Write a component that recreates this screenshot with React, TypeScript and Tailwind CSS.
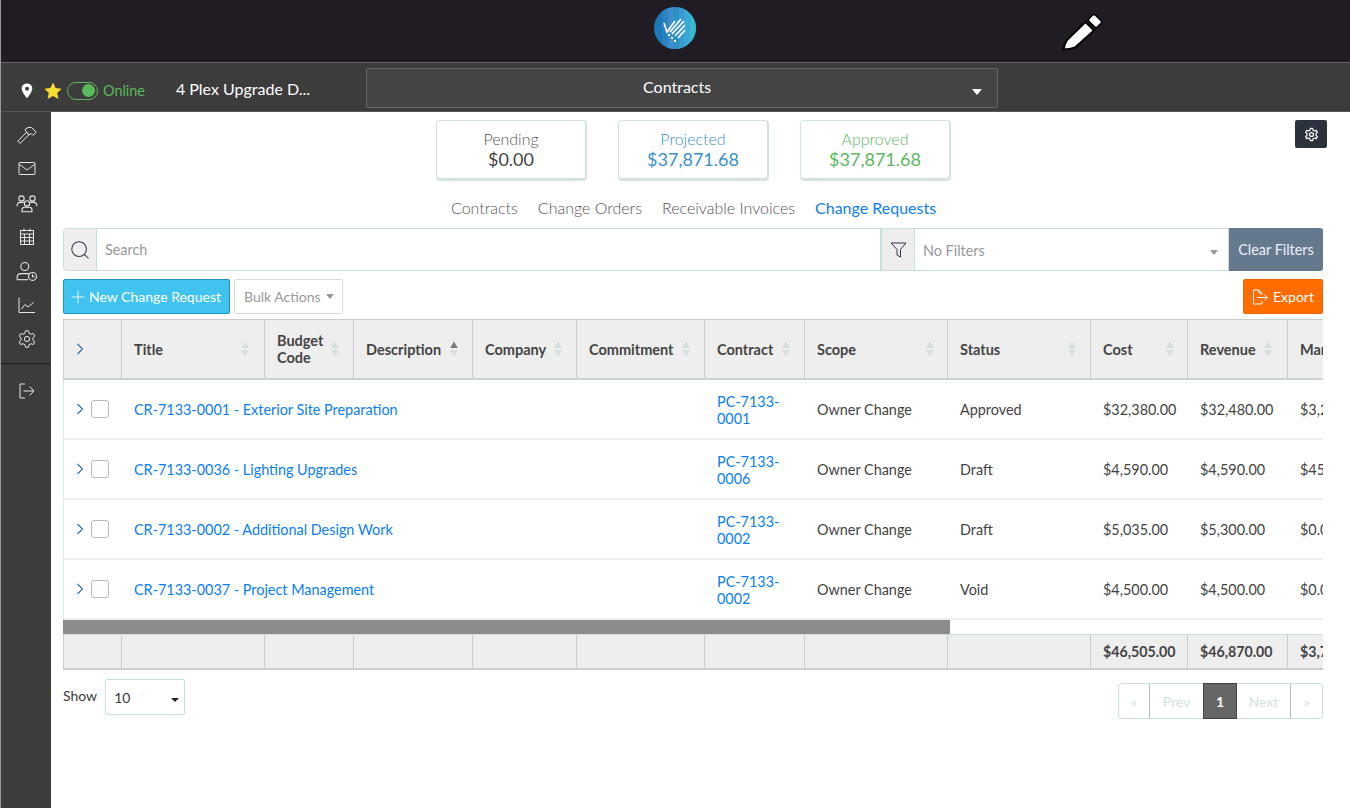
import React from "react";
import { Search, Plus } from "lucide-react";

const cols = "grid grid-cols-[58px_143px_89px_119px_104px_128px_100px_143px_143px_97px_100px_100px] w-[1324px]";

function Sort({ up = false }: { up?: boolean }) {
  return (
    <svg width="10" height="16" viewBox="0 0 10 16" className="shrink-0">
      <path d="M5 0.5 L8.8 7 H1.2 Z" fill={up ? "#7b7b7b" : "#d5dfdd"} />
      <path d="M5 15.5 L8.8 9 H1.2 Z" fill="#d5dfdd" />
    </svg>
  );
}

function Chevron() {
  return (
    <svg width="8" height="12" viewBox="0 0 8 12" fill="none" stroke="#3d6f96" strokeWidth="1.2">
      <path d="M1.5 1 L6.5 6 L1.5 11" />
    </svg>
  );
}

const headers: [string, boolean, string][] = [
  ["Title", false, "w-[106px]"],
  ["Budget Code", false, "w-[53px]"],
  ["Description", true, "w-[83px]"],
  ["Company", false, "w-[68px]"],
  ["Commitment", false, "w-[92px]"],
  ["Contract", false, "w-[64px]"],
  ["Scope", false, "w-[108px]"],
  ["Status", false, "w-[107px]"],
  ["Cost", false, "w-[62px]"],
  ["Revenue", false, "w-[63px]"],
  ["Margin", false, "w-[74px]"],
];

const rows = [
  ["CR-7133-0001 - Exterior Site Preparation", "PC-7133-0001", "Approved", "$32,380.00", "$32,480.00", "$3,248.00"],
  ["CR-7133-0036 - Lighting Upgrades", "PC-7133-0006", "Draft", "$4,590.00", "$4,590.00", "$459.00"],
  ["CR-7133-0002 - Additional Design Work", "PC-7133-0002", "Draft", "$5,035.00", "$5,300.00", "$0.00"],
  ["CR-7133-0037 - Project Management", "PC-7133-0002", "Void", "$4,500.00", "$4,500.00", "$0.00"],
];

function Logo() {
  return (
    <svg width="42" height="42" viewBox="0 0 42 42">
      <defs>
        <clipPath id="lc"><circle cx="21" cy="21" r="21" /></clipPath>
      </defs>
      <g clipPath="url(#lc)">
        <rect width="42" height="42" fill="#1d78b8" />
        <rect x="8" width="6" height="42" fill="#2a82c2" />
        <rect x="14" width="6" height="42" fill="#3a8fcb" />
        <rect x="20" width="5" height="42" fill="#2b93c4" />
        <rect x="25" width="5" height="42" fill="#3d97d0" />
        <rect x="30" width="6" height="42" fill="#37a9d4" />
        <rect x="36" width="6" height="42" fill="#3bb7d0" />
      </g>
      <g stroke="#fff" strokeWidth="1.7" fill="none">
        <path d="M10 16 L13 25 L21 14" />
        <path d="M16 25 L27 12" />
        <path d="M18 27 L30 14" />
        <path d="M21 29 L31 18" />
        <path d="M24 31 L31 23" />
      </g>
      <g fill="#fff">
        <rect x="14" y="27" width="2" height="2" />
        <rect x="17" y="30" width="2" height="2" />
        <rect x="20" y="33" width="2" height="2" />
      </g>
    </svg>
  );
}

function Pencil() {
  return (
    <svg width="42" height="42" viewBox="0 0 42 42">
      <path d="M2.5 37.5 Q3 33 6 28 L24.5 10 L33 18.5 L14 35.5 Q9 37.5 2.5 37.5 Z" fill="#fff" stroke="#000" strokeWidth="2" strokeLinejoin="round" />
      <rect x="28" y="4.5" width="12" height="9" rx="2.2" transform="rotate(45 34 9)" fill="#fff" stroke="#000" strokeWidth="1.6" />
    </svg>
  );
}

const I = "#e3e6ea";
function SideIcon({ children, w = 20, h = 20 }: { children: React.ReactNode; w?: number; h?: number }) {
  return (
    <svg width={w} height={h} viewBox="0 0 20 20" fill="none" stroke={I} strokeWidth="1">
      {children}
    </svg>
  );
}

const gearPath = "M8.5 1.8 H11.5 L12 4.2 L14 5.3 L16.3 4.5 L17.8 7.1 L16 8.7 V11.3 L17.8 12.9 L16.3 15.5 L14 14.7 L12 15.8 L11.5 18.2 H8.5 L8 15.8 L6 14.7 L3.7 15.5 L2.2 12.9 L4 11.3 V8.7 L2.2 7.1 L3.7 4.5 L6 5.3 L8 4.2 Z";

function Sidebar() {
  return (
    <aside className="w-[50px] shrink-0 bg-[#3c3c3c] flex flex-col items-center pt-[13px] pl-[2px]">
      <div className="h-[34px] flex items-start justify-center">
        <SideIcon>
          <path d="M0.8 16.2 L3 18.4 L12 9.8 L9.6 7.2 Z" />
          <path d="M8 4.5 Q11 1.2 14.5 2.5 L19.2 7.2 L16 10.3 L14.3 8.6 L12 9.8 L9.6 7.2 Z" strokeLinejoin="round" />
        </SideIcon>
      </div>
      <div className="h-[34px] flex items-start justify-center">
        <SideIcon>
          <rect x="2" y="3.5" width="16" height="12" rx="1" />
          <path d="M2 5 L10 11 L18 5" />
        </SideIcon>
      </div>
      <div className="h-[34px] flex items-start justify-center">
        <SideIcon w={22} h={22}>
          <circle cx="5" cy="5" r="2.4" />
          <circle cx="15" cy="5" r="2.4" />
          <circle cx="10" cy="9.5" r="2.4" />
          <path d="M1 12 Q1 8.5 4 8.5 H7" />
          <path d="M19 12 Q19 8.5 16 8.5 H13" />
          <path d="M5.5 17 V15.5 Q5.5 13 8 13 H12 Q14.5 13 14.5 15.5 V17 Z" />
        </SideIcon>
      </div>
      <div className="h-[34px] flex items-start justify-center">
        <SideIcon>
          <rect x="3.5" y="3.5" width="13" height="14" />
          <path d="M3.5 7 H16.5 M3.5 10.5 H16.5 M3.5 14 H16.5 M7.5 7 V17.5 M12.5 7 V17.5 M7 1.5 V4.5 M13 1.5 V4.5" />
        </SideIcon>
      </div>
      <div className="h-[34px] flex items-start justify-center">
        <SideIcon w={22} h={22}>
          <circle cx="8" cy="5" r="3.6" />
          <path d="M1 17 V15 Q1 11.5 5 11.5 H11 Q12 11.5 12.5 12" />
          <path d="M1 17 H11" />
          <circle cx="15" cy="14" r="3.6" />
          <path d="M15 12 V14.3 H17" />
        </SideIcon>
      </div>
      <div className="h-[34px] flex items-start justify-center">
        <SideIcon>
          <path d="M2 2.5 V17.5 H18" />
          <path d="M4.5 14 L8 9.5 L11 12 L16.5 7.5" />
        </SideIcon>
      </div>
      <div className="h-[35px] flex items-start justify-center">
        <SideIcon>
          <circle cx="10" cy="10" r="2.6" />
          <path d={gearPath} strokeLinejoin="round" />
        </SideIcon>
      </div>
      <div className="w-[calc(100%+2px)] ml-[-2px] border-t border-[#1f1f1f] mt-[-1px] h-[18px]" />
      <SideIcon>
        <path d="M8 3 H3 V17 H8" />
        <path d="M6.5 10 H17 M12.5 5.5 L17 10 L12.5 14.5" />
      </SideIcon>
    </aside>
  );
}

function Stat({ label, value, tone, toneLabel }: { label: string; value: string; tone: string; toneLabel: string }) {
  return (
    <div className="w-[151px] h-[60px] rounded-[4px] border border-[#d3e2e0] border-b-2 border-r-2 shadow-[0_1px_1px_rgba(150,170,170,0.35)] flex flex-col items-center pt-[8px]">
      <div className={`text-[16px] leading-[19px] font-light ${toneLabel}`}>{label}</div>
      <div className={`text-[18px] leading-[22px] ${tone}`}>{value}</div>
    </div>
  );
}

export default function App() {
  return (
    <div className="w-[1350px] h-[808px] overflow-hidden flex flex-col bg-white border-l border-[#9a9a9a] text-[14px] text-[#3a3a3a] font-['Lato','Liberation_Sans',sans-serif]">
      <header className="h-[62px] shrink-0 bg-[#211c23] flex relative items-center">
        <div className="ml-[653px] mt-[-7px]"><Logo /></div>
        <div className="ml-[365px] mt-[3px]"><Pencil /></div>
      </header>
      <div className="h-[50px] shrink-0 bg-[#3c3c3c] border-t border-[#666] border-b border-b-[#555] flex items-center pt-[6px]">
        <svg width="12" height="16" viewBox="0 0 12 16" className="ml-[20px] mt-[2px]">
          <path fillRule="evenodd" d="M6 0.5 C2.8 0.5 0.7 2.8 0.7 5.6 C0.7 9 6 15.5 6 15.5 C6 15.5 11.3 9 11.3 5.6 C11.3 2.8 9.2 0.5 6 0.5 Z M6 3.8 A2 2 0 1 1 6 7.8 A2 2 0 1 1 6 3.8 Z" fill="#fff" />
        </svg>
        <svg width="18" height="18" viewBox="0 0 18 18" className="ml-[11px] mt-[2px]">
          <path d="M9 0.5 L11.6 6 L17.6 6.8 L13.2 10.9 L14.4 17 L9 14 L3.6 17 L4.8 10.9 L0.4 6.8 L6.4 6 Z" fill="#f5dc2e" />
        </svg>
        <div className="ml-[5px] mt-px w-[31px] h-[18px] rounded-full border border-[#5cb85c] flex items-center justify-end pr-[2px]">
          <div className="w-[13px] h-[13px] rounded-full bg-[#5cb85c]" />
        </div>
        <span className="ml-[5px] mt-px text-[14.4px] text-[#5cb85c]">Online</span>
        <span className="ml-[31px] mt-[-2px] text-[16px] text-white whitespace-nowrap">4 Plex Upgrade D...</span>
        <div className="ml-[56px] mt-[-4px] w-[632px] h-[40px] bg-[#444] border border-[#666] rounded-[2px] flex items-center relative">
          <span className="w-full text-center text-[16px] text-white pb-[2px] pr-[10px]">Contracts</span>
          <svg width="10" height="6" viewBox="0 0 10 6" className="absolute right-[15px] top-[20px]"><path d="M0 0 H10 L5 6 Z" fill="#fff" /></svg>
        </div>
      </div>
      <div className="flex-1 flex min-h-0">
        <Sidebar />
        <main className="flex-1 min-w-0 pl-[12px] pr-[27px] relative">
          <div className="absolute right-[23px] top-[8px] w-[32px] h-[28px] rounded-[2px] bg-[#2b323b] flex items-center justify-center">
            <svg width="15" height="15" viewBox="0 0 20 20" fill="none" stroke="#fff" strokeWidth="1.6">
              <circle cx="10" cy="10" r="2.6" />
              <path d={gearPath} strokeLinejoin="round" />
            </svg>
          </div>
          <div className="flex gap-[31px] pl-[373px] pt-[8px]">
            <Stat label="Pending" value="$0.00" tone="text-[#444]" toneLabel="text-[#555]" />
            <Stat label="Projected" value="$37,871.68" tone="text-[#3b8fca]" toneLabel="text-[#3b8fca]" />
            <Stat label="Approved" value="$37,871.68" tone="text-[#5cb85c]" toneLabel="text-[#5cb85c]" />
          </div>
          <nav className="flex pl-[388px] mt-[18px] h-[20px] items-center text-[16px] font-light text-[#555] whitespace-nowrap gap-[20px]">
            <span>Contracts</span>
            <span>Change Orders</span>
            <span>Receivable Invoices</span>
            <span className="text-[#0d7ef0] font-normal">Change Requests</span>
          </nav>
          <div className="flex mt-[10px] h-[43px]">
            <div className="flex flex-1 border border-[#c9dfdd] rounded-l-[4px]">
              <div className="w-[33px] bg-[#eee] border-r border-[#c9dfdd] flex items-center justify-center rounded-l-[4px]">
                <Search size={22} strokeWidth={1.1} color="#334" />
              </div>
              <div className="flex-1 flex items-center pl-[8px] text-[14.4px] text-[#999]">Search</div>
              <div className="w-[35px] bg-[#eee] border-l-2 border-r border-[#c9dfdd] flex items-center justify-center">
                <svg width="17" height="16" viewBox="0 0 17 16" fill="none" stroke="#334" strokeWidth="1"><path d="M1 1 H16 L10.5 7.5 V15 L7 13 V7.5 Z" /></svg>
              </div>
              <div className="w-[313px] flex items-center pl-[8px] pt-[2px] text-[14.4px] text-[#999] relative">
                No Filters
                <svg width="8" height="5" viewBox="0 0 8 5" className="absolute right-[10px] top-[21px]"><path d="M0 0 H8 L4 5 Z" fill="#999" /></svg>
              </div>
            </div>
            <div className="w-[94px] bg-[#65798c] text-[14.4px] text-[#eef] rounded-r-[3px] flex items-center justify-center whitespace-nowrap">Clear Filters</div>
          </div>
          <div className="flex mt-[8px] h-[35px] items-stretch">
            <div className="w-[167px] bg-[#41c3ef] border border-[#1a94c0] rounded-[2px] text-white flex items-center pl-[4px] whitespace-nowrap">
              <Plus size={20} strokeWidth={1} className="mr-px" />New Change Request
            </div>
            <div className="ml-[4px] w-[109px] border border-[#d5dedd] rounded-[2px] text-[#999] flex items-center pl-[9px] gap-[5px]">
              Bulk Actions
              <svg width="8" height="5" viewBox="0 0 8 5"><path d="M0 0 H8 L4 5 Z" fill="#999" /></svg>
            </div>
            <div className="ml-auto w-[80px] bg-[#ff6d00] border border-[#ee6500] rounded-[2px] text-white flex items-center justify-center gap-[4px]">
              <svg width="17" height="16" viewBox="0 0 17 16" fill="none" stroke="#fff" strokeWidth="1">
                <path d="M10 6 V4 L7 1 H1.5 V15 H10 V12" />
                <path d="M7 1 V4 H10" />
                <path d="M5 8.5 H15 M12.5 6 L15.5 8.5 L12.5 11" />
              </svg>
              Export
            </div>
          </div>
          <div className="mt-[5px] w-[1260px] overflow-hidden">
            <div className={`${cols} h-[61px] bg-[#eee] border-t border-b-2 border-[#ccc] border-b-[#c9d4d4] font-bold text-[14.5px] text-[#444]`}>
              <div className="border-l border-[#ccc] flex items-center pl-[12px]"><Chevron /></div>
              {headers.map(([h, up, w]) => (
                <div key={h} className="border-l border-[#ccc] flex items-center pl-[12px]">
                  <span className={`${w} leading-[17px] shrink-0`}>{h}</span>
                  <Sort up={up} />
                </div>
              ))}
            </div>
            {rows.map((r) => (
              <div key={r[0]} className={`${cols} h-[60px] border-b-2 border-[#eef1f1] text-[14.4px] text-[#444]`}>
                <div className="border-l border-[#d6ecea] flex items-center pl-[12px] gap-[7px]">
                  <Chevron />
                  <div className="w-[18px] h-[18px] border border-[#bbb] rounded-[3px]" />
                </div>
                <div className="flex items-center pl-[13px] pt-[2px] text-[#0d7ef0] whitespace-nowrap">{r[0]}</div>
                <div /><div /><div /><div />
                <div className="flex items-center pl-[13px] pt-[2px] pr-[14px] text-[#0d7ef0] leading-[17px]">{r[1]}</div>
                <div className="flex items-center pl-[13px] pt-[2px]">Owner Change</div>
                <div className="flex items-center pl-[13px] pt-[2px]">{r[2]}</div>
                <div className="flex items-center pl-[13px] pt-[2px]">{r[3]}</div>
                <div className="flex items-center pl-[13px] pt-[2px]">{r[4]}</div>
                <div className="flex items-center pl-[13px] pt-[2px]">{r[5]}</div>
              </div>
            ))}
            <div className="h-[15px] border-b border-[#c9dfdd]">
              <div className="w-[887px] h-[14px] bg-[#8c8c8c]" />
            </div>
            <div className={`${cols} h-[35px] bg-[#eee] border-b-2 border-[#ccc] font-bold text-[14.2px] text-[#444]`}>
              <div className="border-l border-[#ccc]" />
              <div className="border-l border-[#ccc]" />
              <div className="border-l border-[#ccc]" />
              <div className="border-l border-[#ccc]" />
              <div className="border-l border-[#ccc]" />
              <div className="border-l border-[#ccc]" />
              <div className="border-l border-[#ccc]" />
              <div className="border-l border-[#ccc]" />
              <div className="border-l border-[#ccc]" />
              <div className="border-l border-[#ccc] flex items-center pl-[12px]">$46,505.00</div>
              <div className="border-l border-[#ccc] flex items-center pl-[12px]">$46,870.00</div>
              <div className="border-l border-[#ccc] flex items-center pl-[12px]">$3,707.00</div>
            </div>
          </div>
          <div className="flex w-[1260px] mt-[9px]">
            <span className="mt-[6px]">Show</span>
            <div className="ml-[8px] w-[80px] h-[36px] border border-[#c9dfdd] rounded-[2px] flex items-center pl-[8px] relative">
              10
              <svg width="8" height="4" viewBox="0 0 8 4" className="absolute right-[5px] top-[18px]"><path d="M0 0 H8 L4 4 Z" fill="#222" /></svg>
            </div>
            <div className="ml-auto mt-[4px] h-[36px] flex text-[#cfe3e1] border border-[#c9dfdd] rounded-[4px]">
              <div className="w-[31px] border-r border-[#bbb] flex items-center justify-center">«</div>
              <div className="w-[53px] flex items-center justify-center">Prev</div>
              <div className="w-[34px] mt-[-1px] mb-[-1px] bg-[#666] border border-[#444] text-white font-bold flex items-center justify-center">1</div>
              <div className="w-[54px] border-r border-[#bbb] flex items-center justify-center">Next</div>
              <div className="w-[31px] flex items-center justify-center">»</div>
            </div>
          </div>
        </main>
      </div>
    </div>
  );
}
